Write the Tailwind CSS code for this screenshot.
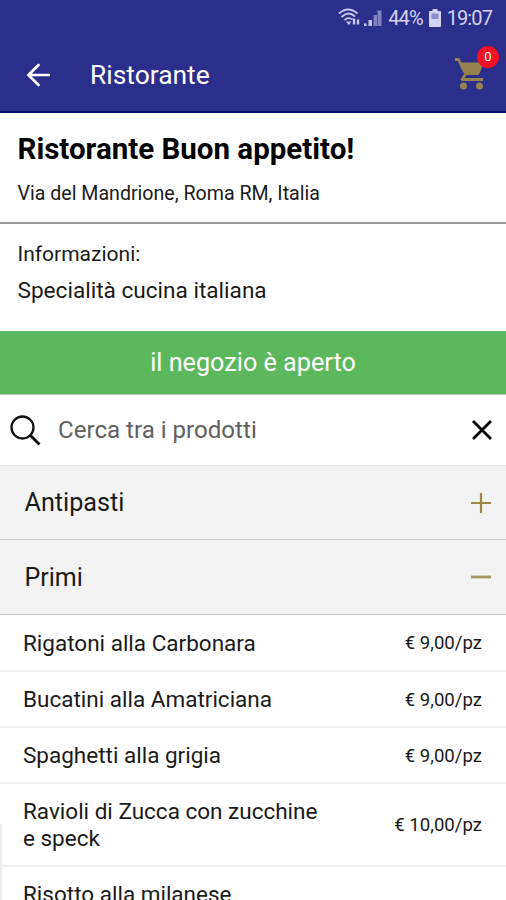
<!DOCTYPE html>
<html lang="it">
<head>
  <meta charset="UTF-8" />
  <meta name="viewport" content="width=device-width, initial-scale=1.0"/>
  <title>Ristorante</title>
  <script src="https://cdn.jsdelivr.net/npm/@tailwindcss/browser@4"></script>
</head>
<body class="w-[506px] h-[900px] overflow-hidden bg-white font-[Roboto,sans-serif] text-[#1a1a1a] whitespace-nowrap">
  <!-- Status bar + toolbar -->
  <header class="h-[113px] bg-[#2c2e8b] border-b-2 border-[#0a0a6b] text-white">
    <div class="h-[36px] flex items-center justify-end pr-[14px] text-[20px] tracking-[-0.900px] text-[#d3d4f2]">
      <svg class="w-[44px] h-[20px] mr-[6px]" viewBox="0 0 44 20" fill="none" stroke="#c5c6ea" stroke-width="1.900">
        <path d="M1 5.500Q10 -2.500 19.500 5.500M3.500 9Q10.300 2.500 17 8.500M6.500 12Q10.300 8.500 14.500 11.500" />
        <path d="M8 13.500L10.800 17L13.500 13.500Z" fill="#c5c6ea" stroke="none" />
        <path d="M16 10.500v6M20 11.500v5" stroke-width="2.400" />
        <path d="M26 18v-2.500h2.500V18zM30.500 18v-6h3.500v6z" fill="#c5c6ea" stroke="none" />
        <path d="M35.500 18V7H39v11zM39.500 18V2.500h4V18z" fill="#8182c1" stroke="none" />
      </svg>
      <span>44%</span>
      <svg class="w-[12px] h-[18px] ml-[6px] mr-[6px]" viewBox="0 0 12 18">
        <path d="M3.500 0h5v2H11a1 1 0 0 1 1 1v14a1 1 0 0 1-1 1H1a1 1 0 0 1-1-1V3a1 1 0 0 1 1-1h2.500z" fill="#d3d4f2" />
        <path d="M2.500 4.500h7V10h-7z" fill="#8b8dc8" />
      </svg>
      <span>19:07</span>
    </div>
    <div class="h-[77px] flex items-center pl-[26px] pr-[21px]">
      <svg class="w-[24px] h-[24px]" viewBox="0 0 24 24" fill="none" stroke="#fff" stroke-width="2.700" stroke-linecap="round">
        <path d="M23 12H3M12.500 2L2.500 12L12.500 22" />
      </svg>
      <h1 class="ml-[40px] pt-[2px] text-[26.400px]">Ristorante</h1>
      <div class="relative ml-auto mt-[-2px]">
        <svg class="w-[30px] h-[34px]" viewBox="0 0 30 34" fill="none" stroke="#94824f">
          <path d="M0 2.500H3.500L10.500 17L7 22.500H28" stroke-width="2.800" stroke-linejoin="round" />
          <path d="M4.500 5.500H29L24.500 16.500Q24 18 22.500 18H10.500z" fill="#94824f" stroke="none" />
          <circle cx="8.500" cy="29" r="3.500" fill="#94824f" stroke="none" />
          <circle cx="24.500" cy="29" r="3.500" fill="#94824f" stroke="none" />
        </svg>
        <span class="absolute -top-[11px] -right-[14px] w-[22px] h-[22px] rounded-full bg-[#f80f24] text-[13px] leading-[22px] text-center">0</span>
      </div>
    </div>
  </header>

  <section class="h-[111px] pl-[17.500px] pt-[18px] border-b-2 border-[#979797]">
    <h2 class="text-[29.500px] leading-[36px] font-bold text-black">Ristorante Buon appetito!</h2>
    <p class="mt-[15px] text-[19.600px] leading-[24px]">Via del Mandrione, Roma RM, Italia</p>
  </section>

  <section class="h-[107px] pl-[17.500px] pt-[17px]">
    <p class="text-[21px] leading-[26px]">Informazioni:</p>
    <p class="mt-[11px] text-[22.600px] leading-[26px]">Specialità cucina italiana</p>
  </section>

  <div class="h-[64px] bg-[#5cb85c] flex items-center justify-center text-[25.200px] text-white border-b border-[#b9c9b9]">il negozio è aperto</div>

  <div class="h-[70px] flex items-center pl-[10px] pr-[14px]">
    <svg class="w-[31px] h-[31px]" viewBox="0 0 31 31" fill="none" stroke="#111" stroke-width="2.300">
      <circle cx="12.500" cy="12.500" r="11" />
      <path d="M20 20L29.500 29.500" stroke-width="2.800" />
    </svg>
    <span class="ml-[17px] text-[24.100px] text-[#606060]">Cerca tra i prodotti</span>
    <svg class="ml-auto w-[20px] h-[20px]" viewBox="0 0 20 20" fill="none" stroke="#000" stroke-width="2.800">
      <path d="M1 1L19 19M19 1L1 19" />
    </svg>
  </div>

  <!-- Categories -->
  <div class="h-[75px] bg-[#f3f3f3] border-t border-b border-t-[#e6e6e6] border-b-[#cfcfcf] flex items-center justify-between pl-[24.500px] pr-[15px]">
    <span class="text-[25.200px]">Antipasti</span>
    <svg class="w-[20px] h-[20px]" viewBox="0 0 20 20" stroke="#9c8648" stroke-width="2.200"><path d="M0 10H20M10 0V20" /></svg>
  </div>
  <div class="h-[75px] bg-[#f3f3f3] border-b border-[#c6c6c6] flex items-center justify-between pl-[24.500px] pr-[15px]">
    <span class="pt-[2px] text-[25px]">Primi</span>
    <svg class="w-[20px] h-[20px]" viewBox="0 0 20 20" stroke="#a49462" stroke-width="2.800"><path d="M0 10H20" /></svg>
  </div>

  <!-- Products -->
  <ul class="text-[22.500px] leading-[27px]">
    <li class="h-[57px] border-b-2 border-[#f0f0f0] flex items-center justify-between pl-[23px] pr-[24px]">
      <span class="pt-[2px]">Rigatoni alla Carbonara</span><span class="pt-[2px] text-[18.600px]">€ 9,00/pz</span>
    </li>
    <li class="h-[56px] border-b-2 border-[#f0f0f0] flex items-center justify-between pl-[23px] pr-[24px]">
      <span>Bucatini alla Amatriciana</span><span class="pt-[2px] text-[18.600px]">€ 9,00/pz</span>
    </li>
    <li class="h-[56px] border-b-2 border-[#f0f0f0] flex items-center justify-between pl-[23px] pr-[24px]">
      <span>Spaghetti alla grigia</span><span class="pt-[2px] text-[18.600px]">€ 9,00/pz</span>
    </li>
    <li class="h-[83px] border-b-2 border-[#f0f0f0] flex items-center justify-between pl-[23px] pr-[24px]">
      <span>Ravioli di Zucca con zucchine<br>e speck</span><span class="pt-[2px] text-[18.600px]">€ 10,00/pz</span>
    </li>
    <li class="h-[54px] flex items-center pl-[23px]">Risotto alla milanese</li>
  </ul>
  <!-- Edge of the drawer peeking in from the left -->
  <div class="absolute left-0 top-[824px] w-[2px] h-[76px] bg-[#ededed]"></div>
</body>
</html>
